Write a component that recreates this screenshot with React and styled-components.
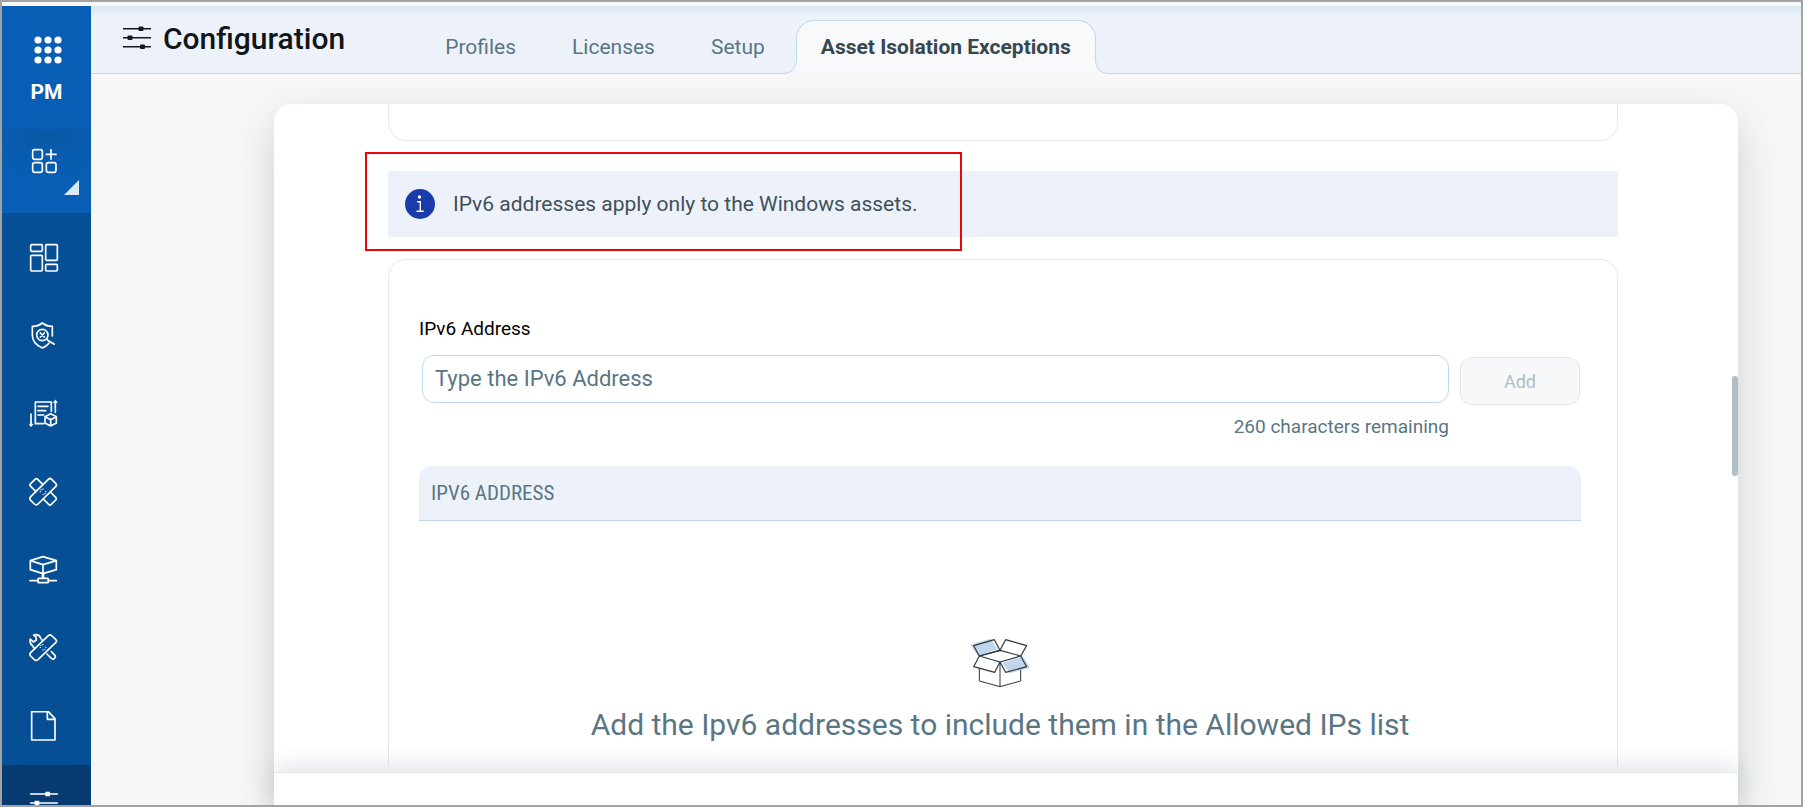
import React, { useState } from "react";
import styled, { createGlobalStyle } from "styled-components";

const GlobalStyle = createGlobalStyle`
  * {
    box-sizing: border-box;
  }
  body {
    margin: 0;
    font-family: Roboto, "Liberation Sans", sans-serif;
    background: #f7f7f7;
  }
  svg {
    display: block;
  }
`;

const Frame = styled.div`
  display: flex;
  height: 100vh;
  padding-top: 4px;
  border: 2px solid #a3a3a3;
  background: #f7f7f7;
  overflow: hidden;
`;

const Sidebar = styled.nav`
  display: flex;
  flex-direction: column;
  flex: none;
  width: 89px;
  background: #064f94;
  overflow: hidden;
`;

const Brand = styled.a`
  display: flex;
  flex-direction: column;
  align-items: center;
  gap: 16px;
  flex: none;
  height: 123px;
  padding-top: 30px;
  background: #085eb4;
  color: #fff;
  font-size: 21px;
  font-weight: 700;
  line-height: 24px;
  text-decoration: none;
`;

const AppSwitch = styled.button`
  position: relative;
  display: flex;
  align-items: flex-start;
  flex: none;
  height: 84px;
  padding: 18px 0 0 28px;
  border: 0;
  background: radial-gradient(90% 60% at 50% 0, #0a58a6 0%, #085eb4 100%);
  &::after {
    content: "";
    position: absolute;
    right: 12px;
    bottom: 18px;
    width: 15px;
    height: 15px;
    background: #dbe8f5;
    clip-path: polygon(100% 0, 100% 100%, 0 100%);
  }
`;

const NavList = styled.div`
  padding-top: 6px;
`;

const NavItem = styled.a`
  display: flex;
  align-items: center;
  height: 78px;
  padding-left: 27px;
  background: ${(props) => (props.$active ? "#083b71" : "transparent")};
`;

const Main = styled.main`
  display: flex;
  flex-direction: column;
  flex: 1;
  min-width: 0;
`;

const Header = styled.header`
  display: flex;
  flex: none;
  height: 68px;
  padding-left: 32px;
  border-bottom: 1px solid #c0d8ee;
  background: linear-gradient(#d8e7ef, #edf2fa 10px);
`;

const Title = styled.h1`
  display: flex;
  align-items: center;
  gap: 12px;
  height: 64px;
  margin: 0 72px 0 0;
  color: #111518;
  font-size: 30px;
  font-weight: 500;
`;

const Tabs = styled.div`
  display: flex;
  align-items: flex-end;
`;

const Tab = styled.a`
  position: relative;
  height: 54px;
  margin: ${(props) => (props.$active ? "0 0 -1px 3px" : "0 0 -1px")};
  padding: ${(props) => (props.$active ? "0 24px" : "1px 28px 0")};
  border: ${(props) => (props.$active ? "1px solid #c0d8ee" : "0")};
  border-bottom: 0;
  border-radius: 18px 18px 0 0;
  background: ${(props) => (props.$active ? "#f7f9fa" : "transparent")};
  color: ${(props) => (props.$active ? "#37474f" : "#5a7684")};
  font-size: 21px;
  font-weight: ${(props) => (props.$active ? 700 : 400)};
  line-height: 52px;
  text-decoration: none;
`;

const Flare = styled.svg`
  position: absolute;
  bottom: 0;
  ${(props) => (props.$side === "left" ? "right: 100%" : "left: 100%")};
  margin: 0 -1px;
`;

const Body = styled.div`
  display: flex;
  flex-direction: column;
  flex: 1;
  min-height: 0;
  padding: 30px 63px 0 183px;
`;

const Card = styled.section`
  position: relative;
  display: flex;
  flex-direction: column;
  flex: 1;
  min-height: 0;
  border-radius: 18px 18px 0 0;
  background: #fff;
  box-shadow: 0 16px 40px rgba(40, 60, 70, 0.2);
`;

const ScrollArea = styled.div`
  display: flex;
  flex-direction: column;
  flex: 1;
  min-height: 0;
  padding: 0 120px 6px 114px;
  overflow: hidden;
`;

const ScrollThumb = styled.div`
  position: absolute;
  top: 272px;
  right: 0;
  width: 6px;
  height: 100px;
  border-radius: 3px;
  background: #b0bec5;
`;

const Footer = styled.footer`
  flex: none;
  height: 33px;
  border-top: 1px solid #e4e8eb;
  background: #fff;
  box-shadow: 0 -4px 24px rgba(40, 60, 80, 0.16);
`;

const PreviousPanel = styled.div`
  flex: none;
  height: 37px;
  margin-bottom: 30px;
  border: 1px solid #e6ecee;
  border-top: 0;
  border-radius: 0 0 18px 18px;
`;

const Notice = styled.div`
  position: relative;
  display: flex;
  align-items: center;
  flex: none;
  gap: 18px;
  height: 66px;
  margin-bottom: 22px;
  padding-left: 17px;
  background: #edf2fa;
  color: #3f505a;
  font-size: 21px;
`;

const Highlight = styled.div`
  position: absolute;
  top: -19px;
  left: -23px;
  width: 597px;
  height: 99px;
  border: 2px solid #e80606;
`;

const Panel = styled.div`
  flex: 1;
  min-height: 0;
  padding: 57px 36px 0 30px;
  border: 1px solid #e6ecee;
  border-bottom: 0;
  border-radius: 18px 18px 0 0;
  overflow: hidden;
`;

const Label = styled.label`
  display: block;
  margin-bottom: 14px;
  color: #000;
  font-size: 19px;
  line-height: 24px;
`;

const FieldRow = styled.div`
  display: flex;
  align-items: flex-start;
  gap: 11px;
  padding: 0 1px 0 3px;
`;

const Field = styled.div`
  flex: 1;
`;

const Input = styled.input`
  display: block;
  width: 100%;
  height: 48px;
  padding: 0 12px 2px;
  border: 1px solid #c0d8ee;
  border-radius: 12px;
  background: #fff;
  color: #37474f;
  font-family: inherit;
  font-size: 22px;
  &::placeholder {
    color: #5a7684;
    opacity: 1;
  }
`;

const Remaining = styled.div`
  margin-top: 12px;
  color: #5a7684;
  font-size: 19px;
  line-height: 24px;
  text-align: right;
`;

const AddButton = styled.button`
  width: 120px;
  height: 48px;
  margin-top: 2px;
  border: 1px solid #e1e6e9;
  border-radius: 12px;
  background: #f6f8fa;
  color: #b0bec5;
  font-family: inherit;
  font-size: 18px;
`;

const Table = styled.table`
  width: 100%;
  margin-top: 27px;
  border-collapse: separate;
  border-spacing: 0;
`;

const HeadCell = styled.th`
  height: 55px;
  padding: 0 12px;
  border-bottom: 1px solid #c0d8ee;
  border-radius: 12px 12px 0 0;
  background: #edf2fa;
  color: #5a7684;
  font-family: "Roboto Condensed", Roboto, sans-serif;
  font-size: 21px;
  font-weight: 400;
  text-align: left;
`;

const EmptyCell = styled.td`
  padding: 117px 0 0;
  color: #5a7684;
  font-size: 30px;
  line-height: 36px;
  text-align: center;
  svg {
    margin: 0 auto 19px;
  }
`;

const stroke = {
  fill: "none",
  stroke: "#fff",
  strokeWidth: 5,
  strokeLinejoin: "round",
  strokeLinecap: "round",
};

const NavSvg = ({ y, children }) => (
  <svg width="30" height="30" viewBox={`87 ${y} 90 90`} {...stroke}>
    {children}
  </svg>
);

const GridIcon = () => (
  <svg width="30" height="28" viewBox="0 0 30 28" fill="#fff">
    {[4, 14, 24].map((cy) =>
      [6, 16, 26].map((cx) => (
        <circle key={`${cx}-${cy}`} cx={cx} cy={cy} r="3.6" />
      ))
    )}
  </svg>
);

const AddAppIcon = () => (
  <svg
    width="30"
    height="30"
    viewBox="90 444 90 90"
    {...stroke}
    strokeLinecap="butt"
  >
    <rect x="98" y="452" width="29" height="29" rx="6" />
    <rect x="98" y="491" width="29" height="29" rx="6" />
    <rect x="139" y="491" width="29" height="29" rx="6" />
    <path d="M153 450v32M137 466h33" />
  </svg>
);

const SlidersIcon = ({ color = "#fff" }) => (
  <svg width="28" height="28" viewBox="0 0 28 28" fill={color}>
    <path d="M0 4h28v1.600H0zM0 13h28v1.600H0zM0 22h28v1.600H0z" />
    <rect x="15.5" y="2.6" width="5" height="4.4" rx="1" />
    <rect x="4.5" y="11.6" width="5" height="4.4" rx="1" />
    <rect x="17" y="20.6" width="5" height="4.4" rx="1" />
  </svg>
);

const DashboardIcon = () => (
  <NavSvg y={129}>
    <rect x="92" y="134" width="35" height="20" rx="3" />
    <rect x="92" y="166" width="35" height="47" rx="3" />
    <rect x="137" y="134" width="35" height="47" rx="3" />
    <rect x="137" y="193" width="35" height="20" rx="3" />
  </NavSvg>
);

const ShieldIcon = () => (
  <NavSvg y={363}>
    <path d="M157 408v-29c-12 0-22-3-30-10-8 7-18 10-30 10v26c0 19 14 32 30 39 8-3 15-8 20-14" />
    <circle cx="127" cy="405" r="17" />
    <path d="M121 399l12 12M133 399l-12 12M140 417l6 6" />
    <path d="M146 423l16 9" strokeWidth="6" />
  </NavSvg>
);

const ReportIcon = () => (
  <NavSvg y={597}>
    <path d="M131 671h-25v-65h48v28" />
    <path d="M114 619h30M114 632h23M114 645h17" />
    <path d="M152 641l17 9v19l-17 9-17-9v-19zM135 650l17 9 17-9M152 659v19" />
    <path d="M93 642v34M166 637v-33" />
    <path
      d="M87 672h13l-6.500 8zM160 608h13l-6.500-8z"
      fill="#fff"
      strokeWidth="1"
    />
  </NavSvg>
);

const PatchIcon = () => (
  <NavSvg y={831}>
    <path d="M145 838Q150 833 155 838L167 850Q172 855 167 860L114 912Q108 917 103 912L92 901Q87 896 92 890Z" />
    <path d="M129 854l-16-16q-4-4-8 0l-13 13q-4 4 0 8l16 16M151 876l16 16q4 4 0 8l-13 13q-4 4-8 0l-16-16" />
    <path
      d="M129 867v.1M121 875v.1M129 883v.1M137 875v.1M123 869v.1M135 881v.1"
      strokeWidth="4"
    />
  </NavSvg>
);

const NetworkIcon = () => (
  <NavSvg y={135}>
    <path d="M129 140l40 12v27l-40 12-38-12v-27zM91 152l38 12 40-12M129 164v27" />
    <path d="M129 191v11" strokeWidth="8" />
    <rect x="114" y="205" width="31" height="13" rx="2" />
    <path d="M90 212h24M145 212h24" />
  </NavSvg>
);

const RepairIcon = () => (
  <NavSvg y={369}>
    <path d="M145 377Q150 372 155 377L167 388Q172 393 167 398L114 449Q108 454 103 449L92 438Q87 433 92 428Z" />
    <path d="M104 416q-5-5-6-9-10-5-7-20l9 9 9-6-1-9-7-6q16-4 21 9 2 4 5 7" />
    <path d="M154 425l11 11c4 5-4 15-10 10l-14-14" />
    <path
      d="M129 404v.1M121 412v.1M129 420v.1M137 412v.1M123 406v.1M135 418v.1"
      strokeWidth="4"
    />
  </NavSvg>
);

const FileIcon = () => (
  <NavSvg y={603}>
    <path d="M95 605h50l20 21v64H95zM142 605v23h23" />
  </NavSvg>
);

const ConfigIcon = () => (
  <NavSvg y={837}>
    <path d="M92 852h80M92 879h80M92 907h80" />
    <path
      d="M136 852h14M104 879h14M142 907h14"
      strokeWidth="14"
      strokeLinecap="butt"
    />
  </NavSvg>
);

const InfoIcon = () => (
  <svg width="30" height="30" viewBox="0 0 30 30">
    <circle cx="15" cy="15" r="15" fill="#193caa" />
    <circle cx="14.500" cy="8" r="1.700" fill="#fff" />
    <path
      d="M12 12.700h3.300v9.600M11.500 22.300h7.200"
      fill="none"
      stroke="#fff"
      strokeWidth="1.400"
    />
  </svg>
);

const BoxIcon = () => (
  <svg width="60" height="50" viewBox="0 0 180 150">
    <path
      d="M0 20l62-18 20 32-58 20zM98 74l62-18 20 34-62 16z"
      fill="#c0d6ec"
    />
    <g fill="none" stroke="#2b363c" strokeWidth="3.500" strokeLinejoin="round">
      <path d="M90 37l62 17-62 18-62-18z" />
      <path d="M90 37L73 5 11 23l17 31zM90 37l17-32 63 18-18 31" />
      <path d="M28 54L11 86l63 17 16-31 17 31 63-17-18-32" />
      <path d="M28 91v38l62 17 62-17V96M90 72v74" strokeWidth="3" />
    </g>
  </svg>
);

const TabFlare = ({ side }) => (
  <Flare $side={side} width="15" height="16" viewBox="0 0 15 16">
    <g transform={side === "right" ? "matrix(-1 0 0 1 15 0)" : undefined}>
      <path d="M15 0v16H0v-.5C9 15.500 13.500 10 13.500 0z" fill="#f7f8f9" />
      <path
        d="M13.500 0C13.500 10 9 15.500 0 15.500"
        fill="none"
        stroke="#c0d8ee"
      />
    </g>
  </Flare>
);

const navItems = [
  { name: "Dashboard", Icon: DashboardIcon },
  { name: "Vulnerabilities", Icon: ShieldIcon },
  { name: "Prioritization", Icon: ReportIcon },
  { name: "Patches", Icon: PatchIcon },
  { name: "Assets", Icon: NetworkIcon },
  { name: "Jobs", Icon: RepairIcon },
  { name: "Reports", Icon: FileIcon },
  { name: "Configuration", Icon: ConfigIcon, active: true },
];

const tabs = ["Profiles", "Licenses", "Setup", "Asset Isolation Exceptions"];

const MAX_LENGTH = 260;

const App = () => {
  const [address, setAddress] = useState("");

  return (
    <>
      <GlobalStyle />
      <Frame>
        <Sidebar>
          <Brand href="#home">
            <GridIcon />
            PM
          </Brand>
          <AppSwitch type="button" aria-label="Add">
            <AddAppIcon />
          </AppSwitch>
          <NavList>
            {navItems.map(({ name, Icon, active }) => (
              <NavItem key={name} href="#nav" aria-label={name} $active={active}>
                <Icon />
              </NavItem>
            ))}
          </NavList>
        </Sidebar>
        <Main>
          <Header>
            <Title>
              <SlidersIcon color="#14181b" />
              Configuration
            </Title>
            <Tabs>
              {tabs.map((tab, i) => {
                const active = i === tabs.length - 1;
                return (
                  <Tab key={tab} href="#tab" $active={active}>
                    {active && <TabFlare side="left" />}
                    {tab}
                    {active && <TabFlare side="right" />}
                  </Tab>
                );
              })}
            </Tabs>
          </Header>
          <Body>
            <Card>
              <ScrollArea>
                <PreviousPanel />
                <Notice>
                  <InfoIcon />
                  IPv6 addresses apply only to the Windows assets.
                  <Highlight />
                </Notice>
                <Panel>
                  <Label htmlFor="ipv6">IPv6 Address</Label>
                  <FieldRow>
                    <Field>
                      <Input
                        id="ipv6"
                        type="text"
                        placeholder="Type the IPv6 Address"
                        maxLength={MAX_LENGTH}
                        value={address}
                        onChange={(e) => setAddress(e.target.value)}
                      />
                      <Remaining>
                        {`${MAX_LENGTH - address.length} characters remaining`}
                      </Remaining>
                    </Field>
                    <AddButton type="button" disabled={!address}>
                      Add
                    </AddButton>
                  </FieldRow>
                  <Table>
                    <thead>
                      <tr>
                        <HeadCell scope="col">IPV6 ADDRESS</HeadCell>
                      </tr>
                    </thead>
                    <tbody>
                      <tr>
                        <EmptyCell>
                          <BoxIcon />
                          Add the Ipv6 addresses to include them in the Allowed
                          IPs list
                        </EmptyCell>
                      </tr>
                    </tbody>
                  </Table>
                </Panel>
              </ScrollArea>
              <ScrollThumb />
              <Footer />
            </Card>
          </Body>
        </Main>
      </Frame>
    </>
  );
};

export default App;
